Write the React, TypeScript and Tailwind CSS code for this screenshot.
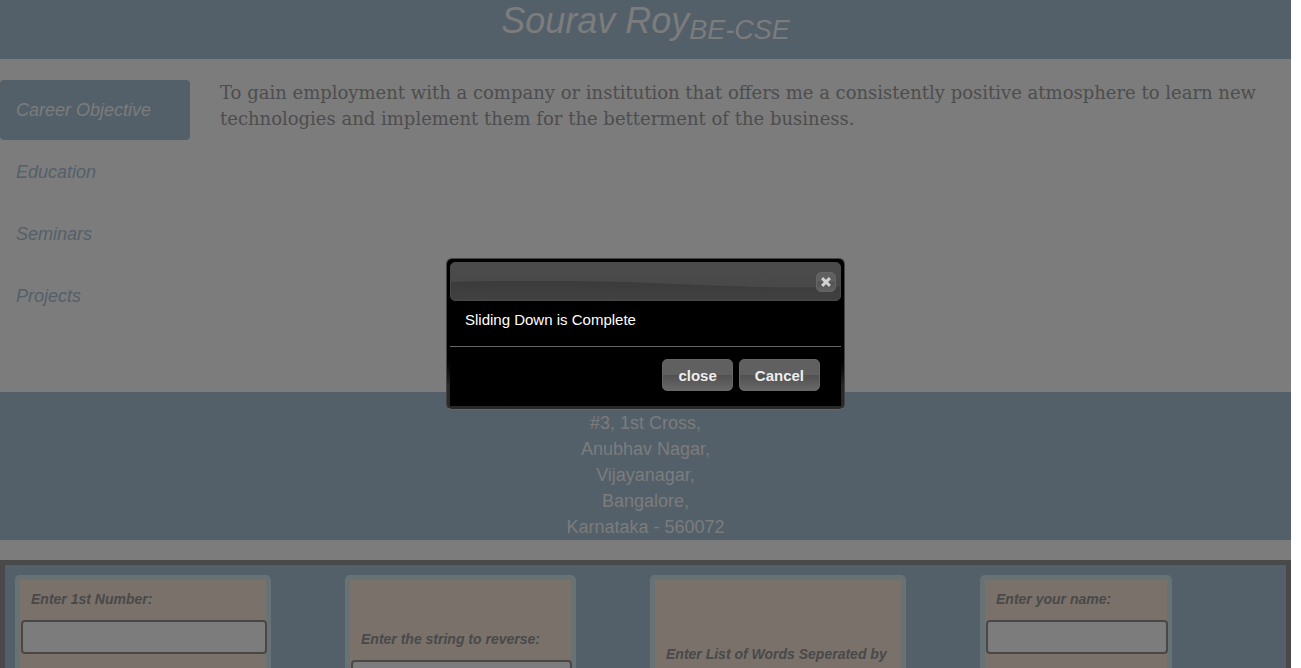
import React from "react";

const tabs = ["Career Objective", "Education", "Seminars", "Projects"];
const address = ["#3, 1st Cross,", "Anubhav Nagar,", "Vijayanagar,", "Bangalore,", "Karnataka - 560072"];

function Card({ id, label, className, input = true }: { id: string; label: string; className: string; input?: boolean }) {
  return (
    <div className={`h-60 shrink-0 rounded-[5px] border-[5px] border-[#677275] bg-[#7a716b] ${className}`}>
      <label htmlFor={input ? id : undefined} className="block whitespace-nowrap px-[11px] text-sm leading-5 font-bold italic text-[#494949]">
        {label}
      </label>
      {input && (
        <input
          id={id}
          type="text"
          className="mt-[11px] ml-px block h-[34px] w-full rounded border-2 border-[#494847] bg-[#7c7c7c] px-3 text-sm outline-none"
        />
      )}
    </div>
  );
}

function Dialog() {
  return (
    <div
      role="dialog"
      aria-label="Sliding Down is Complete"
      className="flex w-[399px] flex-col rounded-md border border-[#444] border-b-[#666] bg-linear-to-b from-black from-60% to-[#292929] to-85% p-[3px] font-['Liberation_Sans',Arial,sans-serif] text-[15px] text-white"
    >
      <div className="relative flex h-[39px] items-center justify-end overflow-hidden rounded-[5px] border border-[#494949] bg-[#404040] pr-1">
        <svg viewBox="0 0 390 37" preserveAspectRatio="none" className="absolute inset-0 h-full w-full" aria-hidden="true">
          <defs>
            <linearGradient id="top" x1="0" y1="0" x2="0" y2="1">
              <stop offset="0" stopColor="#4c4c4c" />
              <stop offset="1" stopColor="#484848" />
            </linearGradient>
            <linearGradient id="base" x1="0" y1="0" x2="0" y2="1">
              <stop offset="0.4" stopColor="#3a3a3a" />
              <stop offset="1" stopColor="#414141" />
            </linearGradient>
          </defs>
          <rect width="390" height="37" fill="url(#base)" />
          <path d="M0 0H390V24C270 26 215 18 105 18C65 18 30 18 0 19Z" fill="url(#top)" />
        </svg>
        <button type="button" aria-label="Close dialog" className="relative flex h-5 w-5 items-center justify-center rounded-[5px] border border-[#666] bg-linear-to-b from-[#606060] from-50% via-[#525252] via-50% to-[#626262]">
          <svg width="10" height="10" viewBox="0 0 10 10" aria-hidden="true">
            <path d="M2.2 2.2L7.8 7.8M7.8 2.2L2.2 7.8" stroke="#d2d2d2" strokeWidth="3" strokeLinecap="square" />
          </svg>
        </button>
      </div>
      <div className="bg-black">
        <p className="px-[15px] pt-[10px] pb-[17px] leading-[18px]">Sliding Down is Complete</p>
        <div className="flex h-[60px] justify-end gap-[6px] border-t border-[#666] pt-3 pr-[21px]">
          {["close", "Cancel"].map((name) => (
            <button key={name} type="button" className="h-8 rounded-[5px] border border-[#666] bg-linear-to-b from-[#606060] from-50% via-[#505050] via-50% to-[#686868] px-[15px] pt-[2px] font-bold text-[#eee]">
              {name}
            </button>
          ))}
        </div>
      </div>
    </div>
  );
}

export default function App() {
  return (
    <div className="h-screen overflow-hidden bg-white pr-[10px] font-['Liberation_Sans',Arial,sans-serif] text-lg leading-[26px]">
      <div className="relative h-full overflow-hidden bg-[#7c7c7c]">
        <header className="h-[59px] bg-[#53606a] text-center text-[#7c7c7c] italic">
          <h1 className="text-[36px] leading-[42px]">
            Sourav Roy<sub className="bottom-[-6px] text-[27px]">BE-CSE</sub>
          </h1>
        </header>

        <main className="flex h-[333px] items-start gap-[30px] pt-[21px]">
          <nav className="flex w-[190px] shrink-0 flex-col gap-[2px] italic">
            {tabs.map((tab, index) => (
              <a
                key={tab}
                href="#"
                className={`flex h-[60px] items-center rounded px-4 ${index === 0 ? "bg-[#53606a] text-[#7c7c7c]" : "text-[#53606a]"}`}
              >
                {tab}
              </a>
            ))}
          </nav>
          <p className="pr-[10px] font-['DejaVu_Serif',serif] text-[#4d4d4d]">
            To gain employment with a company or institution that offers me a consistently positive atmosphere to learn new
            technologies and implement them for the betterment of the business.
          </p>
        </main>

        <address className="h-[148px] bg-[#53606a] pt-[18px] text-center text-[#7c7c7c] not-italic">
          {address.map((line) => (
            <div key={line}>{line}</div>
          ))}
        </address>

        <section className="mt-5 flex gap-[74px] border-[5px] border-[#494949] bg-[#53606a] p-[10px]">
          <Card id="first" label="Enter 1st Number:" className="w-64 pt-[9px]" />
          <Card id="reverse" label="Enter the string to reverse:" className="w-[231px] pt-[49px]" />
          <Card id="words" label="Enter List of Words Seperated by" className="w-64 pt-16" input={false} />
          <Card id="name" label="Enter your name:" className="w-48 pt-[9px]" />
        </section>

        <div className="absolute inset-0 flex items-center justify-center">
          <Dialog />
        </div>
      </div>
    </div>
  );
}
